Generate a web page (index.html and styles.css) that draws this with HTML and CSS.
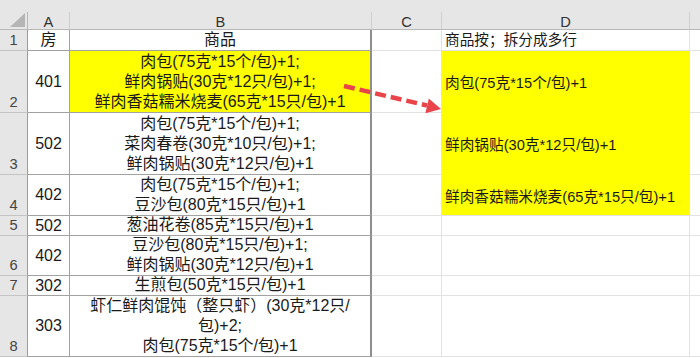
FILE: index.html
```html
<!DOCTYPE html>
<html lang="zh">
<head>
<meta charset="utf-8">
<link rel="stylesheet" href="styles.css">
</head>
<body>
<div class="sheet">
  <div class="topband"></div>
  <div class="grid">
    <div class="corner"><span class="tri"></span></div>
    <div class="colh">A</div>
    <div class="colh">B</div>
    <div class="colh">C</div>
    <div class="colh">D</div>
    <div class="colh last"></div>

    <div class="rh">1</div>
    <div class="ca">房</div>
    <div class="cb"><div>商品</div></div>
    <div class="cc"></div>
    <div class="cd">商品按；拆分成多行</div>
    <div class="ce"></div>

    <div class="rh">2</div>
    <div class="ca">401</div>
    <div class="cb yellow"><div>肉包(75克*15个/包)+1;<br>鲜肉锅贴(30克*12只/包)+1;<br>鲜肉香菇糯米烧麦(65克*15只/包)+1</div></div>
    <div class="cc"></div>
    <div class="cd yellow mid nob">肉包(75克*15个/包)+1</div>
    <div class="ce"></div>

    <div class="rh">3</div>
    <div class="ca">502</div>
    <div class="cb"><div>肉包(75克*15个/包)+1;<br>菜肉春卷(30克*10只/包)+1;<br>鲜肉锅贴(30克*12只/包)+1</div></div>
    <div class="cc"></div>
    <div class="cd yellow mid nob">鲜肉锅贴(30克*12只/包)+1</div>
    <div class="ce"></div>

    <div class="rh">4</div>
    <div class="ca">402</div>
    <div class="cb"><div>肉包(75克*15个/包)+1;<br>豆沙包(80克*15只/包)+1</div></div>
    <div class="cc"></div>
    <div class="cd yellow mid">鲜肉香菇糯米烧麦(65克*15只/包)+1</div>
    <div class="ce"></div>

    <div class="rh">5</div>
    <div class="ca">502</div>
    <div class="cb"><div>葱油花卷(85克*15只/包)+1</div></div>
    <div class="cc"></div>
    <div class="cd"></div>
    <div class="ce"></div>

    <div class="rh">6</div>
    <div class="ca">402</div>
    <div class="cb"><div>豆沙包(80克*15只/包)+1;<br>鲜肉锅贴(30克*12只/包)+1</div></div>
    <div class="cc"></div>
    <div class="cd"></div>
    <div class="ce"></div>

    <div class="rh">7</div>
    <div class="ca">302</div>
    <div class="cb"><div>生煎包(50克*15只/包)+1</div></div>
    <div class="cc"></div>
    <div class="cd"></div>
    <div class="ce"></div>

    <div class="rh">8</div>
    <div class="ca">303</div>
    <div class="cb"><div>虾仁鲜肉馄饨（整只虾）(30克*12只/<br>包)+2;<br>肉包(75克*15个/包)+1</div></div>
    <div class="cc"></div>
    <div class="cd"></div>
    <div class="ce"></div>
  </div>
  <svg class="arrow" width="700" height="358" viewBox="0 0 700 358">
    <line x1="344" y1="86" x2="427" y2="105.5" stroke="#e8444a" stroke-width="4.5" stroke-dasharray="11 5"/>
    <polygon points="441,109 428.8,98.6 425.4,113.2" fill="#e8444a"/>
  </svg>
</div>
</body>
</html>
```
FILE: styles.css
```css
html, body {
  margin: 0;
  padding: 0;
  background: #ffffff;
}

.sheet {
  position: relative;
  width: 700px;
  height: 358px;
  overflow: hidden;
  font-family: "Liberation Sans", "Noto Sans CJK SC", sans-serif;
  color: #1a1a1a;
}

.topband {
  height: 12px;
  background: #e6e6e6;
}

.grid {
  display: grid;
  grid-template-columns: 28px 42px 302px 70px 248px 10px;
  grid-template-rows: 18px 21px 62px 62px 41px 20px 40px 20px 61px;
}

.grid > div {
  box-sizing: border-box;
  overflow: hidden;
  white-space: nowrap;
  line-height: 20px;
}

.colh {
  background: #e6e6e6;
  font-size: 14.67px;
  line-height: 17px !important;
  padding-top: 2px;
  color: #333333;
  text-align: center;
  border-right: 1px solid #cfcfcf;
  border-bottom: 1px solid #b8b8b8;
}

.colh.last {
  border-right: none;
}

.corner {
  background: #e6e6e6;
  position: relative;
  border-bottom: 1px solid #b8b8b8;
  border-right: 1px solid #b8b8b8;
}

.tri {
  position: absolute;
  right: 2px;
  bottom: 2px;
  width: 0;
  height: 0;
  border-style: solid;
  border-width: 0 0 14px 15px;
  border-color: transparent transparent #b5b5b5 transparent;
}

.rh {
  display: flex;
  align-items: flex-end;
  justify-content: center;
  background: #e6e6e6;
  color: #444444;
  font-size: 14.67px;
  border-bottom: 1px solid #c4c4c4;
  border-right: 1px solid #9c9c9c;
}

.ca {
  display: flex;
  align-items: center;
  justify-content: center;
  font-size: 16px;
  border-bottom: 1px solid #a2a2a2;
  border-right: 1px solid #a2a2a2;
}

.cb {
  display: flex;
  align-items: flex-end;
  justify-content: center;
  text-align: center;
  font-size: 16px;
  border-bottom: 1px solid #a2a2a2;
  border-right: 2px solid #8e8e8e;
}

.cc {
  border-bottom: 1px solid #e2e2e2;
  border-right: 1px solid #e2e2e2;
}

.cd {
  display: flex;
  align-items: flex-end;
  font-size: 14.67px;
  padding-left: 3px;
  border-bottom: 1px solid #e2e2e2;
  border-right: 1px solid #e2e2e2;
}

.ce {
  border-bottom: 1px solid #e2e2e2;
}

.yellow {
  background: #ffff00;
}

.cd.mid {
  align-items: center;
  padding-top: 3px;
}

.cd.nob {
  border-bottom-color: #ffff00;
}

.arrow {
  position: absolute;
  left: 0;
  top: 0;
  pointer-events: none;
}
```
